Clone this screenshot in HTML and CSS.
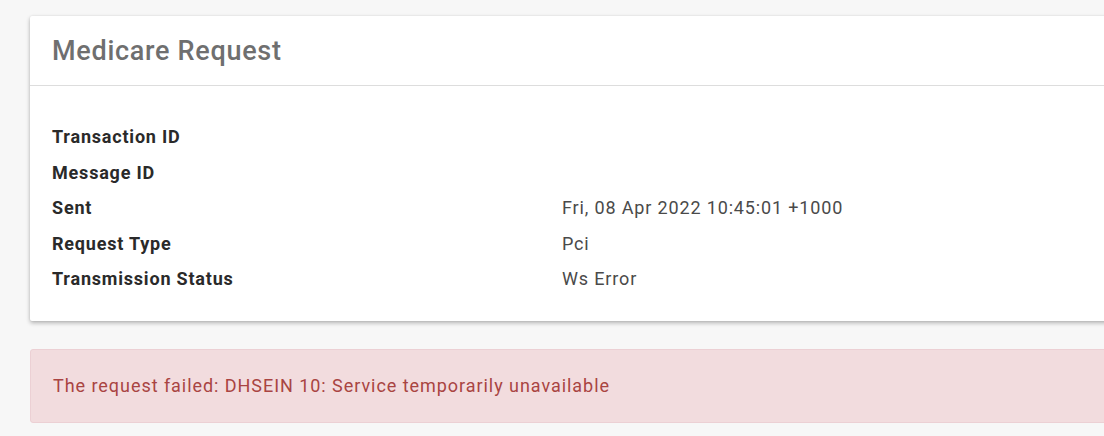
FILE: index.html
```html
<!DOCTYPE html>
<html lang="en">
<head>
    <meta charset="UTF-8">
    <meta name="viewport" content="width=device-width, initial-scale=1.0">
    <title>Medicare Request</title>
    <link rel="stylesheet" href="styles.css">
</head>
<body>
    <div class="page">
        <div class="card">
            <div class="card-header">
                <h2>Medicare Request</h2>
            </div>
            <div class="card-body">
                <div class="detail-row"><span class="label">Transaction ID</span><span class="value"></span></div>
                <div class="detail-row"><span class="label">Message ID</span><span class="value"></span></div>
                <div class="detail-row"><span class="label">Sent</span><span class="value">Fri, 08 Apr 2022 10:45:01 +1000</span></div>
                <div class="detail-row"><span class="label">Request Type</span><span class="value">Pci</span></div>
                <div class="detail-row"><span class="label">Transmission Status</span><span class="value">Ws Error</span></div>
            </div>
        </div>

        <div class="alert alert-danger">
            The request failed: DHSEIN 10: Service temporarily unavailable
        </div>
    </div>
</body>
</html>
```

FILE: styles.css
```css
html, body {
    margin: 0;
    padding: 0;
    overflow: hidden;
}
body {
    font-family: 'Roboto', 'Liberation Sans', sans-serif;
    background-color: #f7f7f7;
    color: #212529;
}
.page {
    width: 1160px;
    padding: 16px 0 0 30px;
}
.card {
    background-color: #fff;
    border-radius: 2px;
    box-shadow: 0 2px 4px rgba(0, 0, 0, 0.28), 0 0 2px rgba(0, 0, 0, 0.08);
}
.card-header {
    height: 69px;
    padding: 0 22px;
    display: flex;
    align-items: center;
    border-bottom: 1px solid #ddd;
}
.card-header h2 {
    margin: 0;
    font-size: 27px;
    font-weight: 500;
    letter-spacing: 0.7px;
    color: #6f6f6f;
}
.card-body {
    padding: 33px 22px 24px;
}
.detail-row {
    display: flex;
    height: 35.5px;
    align-items: center;
    font-size: 18px;
}
.label {
    width: 510px;
    font-weight: 700;
    letter-spacing: 0.8px;
    color: #2a2a2a;
}
.value {
    letter-spacing: 0.85px;
    color: #4a4a4a;
}
.alert {
    margin-top: 28px;
    padding: 25px 22px 26px;
    font-size: 18px;
    line-height: 21px;
    letter-spacing: 0.95px;
    border-radius: 3px;
}
.alert-danger {
    background-color: #f2dcde;
    border: 1px solid #ecd0d4;
    color: #a94442;
}
```
